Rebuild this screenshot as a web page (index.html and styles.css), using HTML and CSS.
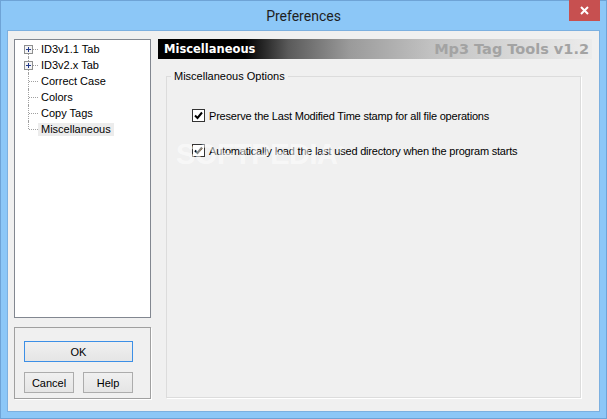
FILE: index.html
```html
<!doctype html>
<html lang="en">
  <head>
    <meta charset="UTF-8" />
    <title>Preferences</title>
    <link rel="stylesheet" href="styles.css">
  </head>
  <body>
    <div class="window">
      <div class="titlebar">
        <span></span>
        <span class="title">Preferences</span>
        <button class="close" title="Close">
          <svg width="9" height="9" viewBox="0 0 9 9">
            <path d="M1 1 L8 8 M8 1 L1 8" stroke="#fff" stroke-width="2" />
          </svg>
        </button>
      </div>

      <div class="client">
        <div class="sidebar">
          <ul class="tree">
            <li class="node first">
              <span class="gutter">
                <svg class="expander" width="9" height="9" viewBox="0 0 9 9">
                  <rect x="0.5" y="0.5" width="8" height="8" fill="#f4f4f4" stroke="#8e8f8f" />
                  <path d="M2 4.5 H7 M4.5 2 V7" stroke="#22398a" />
                </svg>
              </span>
              <span class="label">ID3v1.1 Tab</span>
            </li>
            <li class="node">
              <span class="gutter">
                <svg class="expander" width="9" height="9" viewBox="0 0 9 9">
                  <rect x="0.5" y="0.5" width="8" height="8" fill="#f4f4f4" stroke="#8e8f8f" />
                  <path d="M2 4.5 H7 M4.5 2 V7" stroke="#22398a" />
                </svg>
              </span>
              <span class="label">ID3v2.x Tab</span>
            </li>
            <li class="node"><span class="gutter"></span><span class="label">Correct Case</span></li>
            <li class="node"><span class="gutter"></span><span class="label">Colors</span></li>
            <li class="node"><span class="gutter"></span><span class="label">Copy Tags</span></li>
            <li class="node last"><span class="gutter"></span><span class="label selected">Miscellaneous</span></li>
          </ul>

          <div class="actions">
            <button class="btn default">OK</button>
            <div class="btn-row">
              <button class="btn small">Cancel</button>
              <button class="btn small">Help</button>
            </div>
          </div>
        </div>

        <div class="content">
          <div class="banner">
            <span class="page-name">Miscellaneous</span>
            <span class="brand">Mp3 Tag Tools v1.2</span>
          </div>

          <fieldset class="group">
            <legend>Miscellaneous Options</legend>
            <div class="options">
              <label class="check">
                <span class="box">
                  <svg width="11" height="11" viewBox="0 0 11 11">
                    <path d="M2 5.5 L4.5 8 L9 2.5" fill="none" stroke="#000" stroke-width="2" />
                  </svg>
                </span>
                Preserve the Last Modified Time stamp for all file operations
              </label>
              <label class="check">
                <span class="box">
                  <svg width="11" height="11" viewBox="0 0 11 11">
                    <path d="M2 5.5 L4.5 8 L9 2.5" fill="none" stroke="#000" stroke-width="2" />
                  </svg>
                </span>
                Automatically load the last used directory when the program starts
              </label>
            </div>
            <div class="watermark">SOFTPEDIA<sup>®</sup></div>
          </fieldset>
        </div>
      </div>
    </div>
  </body>
</html>
```

FILE: styles.css
```css
* {
  box-sizing: border-box;
}

body {
  margin: 0;
  font-family: "Liberation Sans", Arial, sans-serif;
  font-size: 11px;
  color: #000;
}

.window {
  width: 607px;
  height: 419px;
  background-color: #8cc7f7;
  border: 1px solid #6ea3d6;
  padding: 0 7px 7px 7px;
}

.titlebar {
  height: 30px;
  display: grid;
  grid-template-columns: 1fr auto 1fr;
}

.title {
  font-family: Roboto, "Noto Sans", sans-serif;
  font-size: 14px;
  color: #1f1f1f;
  line-height: 30px;
}

.close {
  justify-self: end;
  align-self: start;
  width: 31px;
  height: 21px;
  margin-top: -1px;
  margin-right: -1px;
  border: none;
  padding: 0;
  background-color: #c75050;
  display: flex;
  align-items: center;
  justify-content: center;
}

.client {
  height: 380px;
  background-color: #f0f0f0;
  box-shadow: 0 0 0 1px #7cb0e0;
  display: flex;
  padding: 8px 0 0 6px;
}

.sidebar {
  width: 137px;
}

.tree {
  list-style: none;
  margin: 0;
  padding: 1px 0 0 5px;
  height: 279px;
  background-color: #fff;
  border: 1px solid #828790;
}

.node {
  display: flex;
  align-items: center;
  height: 16px;
}

.gutter {
  position: relative;
  width: 18px;
  height: 16px;
}

.gutter::before {
  content: "";
  position: absolute;
  left: 8px;
  top: 0;
  bottom: 0;
  border-left: 1px dotted #a0a0a0;
}

.first .gutter::before {
  top: 8px;
}

.last .gutter::before {
  bottom: 8px;
}

.gutter::after {
  content: "";
  position: absolute;
  left: 9px;
  top: 8px;
  width: 9px;
  border-top: 1px dotted #a0a0a0;
}

.expander {
  position: absolute;
  left: 4px;
  top: 4px;
  z-index: 1;
}

.label {
  padding: 0 3px;
  line-height: 13px;
}

.label.selected {
  background-color: #ececec;
}

.actions {
  margin-top: 9px;
  height: 72px;
  border: 1px solid #a0a0a0;
  box-shadow: 1px 1px 0 #fff;
  padding: 13px 0 0 9px;
}

.btn {
  font-family: "Liberation Sans", Arial, sans-serif;
  font-size: 11px;
  color: #000;
  background: linear-gradient(#f0f0f0, #e5e5e5);
  border: 1px solid #acacac;
  padding: 0;
  height: 21px;
}

.btn.default {
  width: 109px;
  border-color: #3c8fe6;
}

.btn-row {
  display: flex;
  gap: 9px;
  margin-top: 10px;
}

.btn.small {
  width: 50px;
}

.content {
  margin-left: 7px;
  width: 434px;
}

.banner {
  height: 20px;
  display: flex;
  align-items: center;
  justify-content: space-between;
  padding: 0 3px 0 6px;
  background: linear-gradient(to right, #000 0%, #000 20%, #5a5a5a 30%, #9a9a9a 44%, #c2c2c2 63%, #ececec 100%);
  font-family: "DejaVu Sans", Verdana, sans-serif;
  font-weight: bold;
}

.page-name {
  color: #fff;
  font-size: 11.5px;
}

.brand {
  color: #a3a3a3;
  font-size: 14.5px;
}

.group {
  position: relative;
  margin: 11px 11px 0 8px;
  height: 328px;
  padding: 0;
  border: 1px solid #dcdcdc;
  box-shadow: 1px 1px 0 #fff;
}

.group legend {
  margin-left: 4px;
  padding: 0 3px;
  line-height: 13px;
}

.options {
  display: flex;
  flex-direction: column;
  gap: 22px;
  padding: 26px 0 0 25px;
}

.check {
  display: flex;
  align-items: center;
  height: 13px;
  letter-spacing: -0.2px;
}

.box {
  width: 13px;
  height: 13px;
  margin-right: 4px;
  border: 1px solid #333;
  background-color: #fff;
  display: flex;
  align-items: center;
  justify-content: center;
}

.watermark {
  position: absolute;
  left: 9px;
  top: 55px;
  font-family: "Liberation Sans", sans-serif;
  font-weight: bold;
  font-size: 29px;
  letter-spacing: -0.5px;
  color: rgba(255, 255, 255, 0.55);
  pointer-events: none;
}

.watermark sup {
  font-size: 9px;
}
```
